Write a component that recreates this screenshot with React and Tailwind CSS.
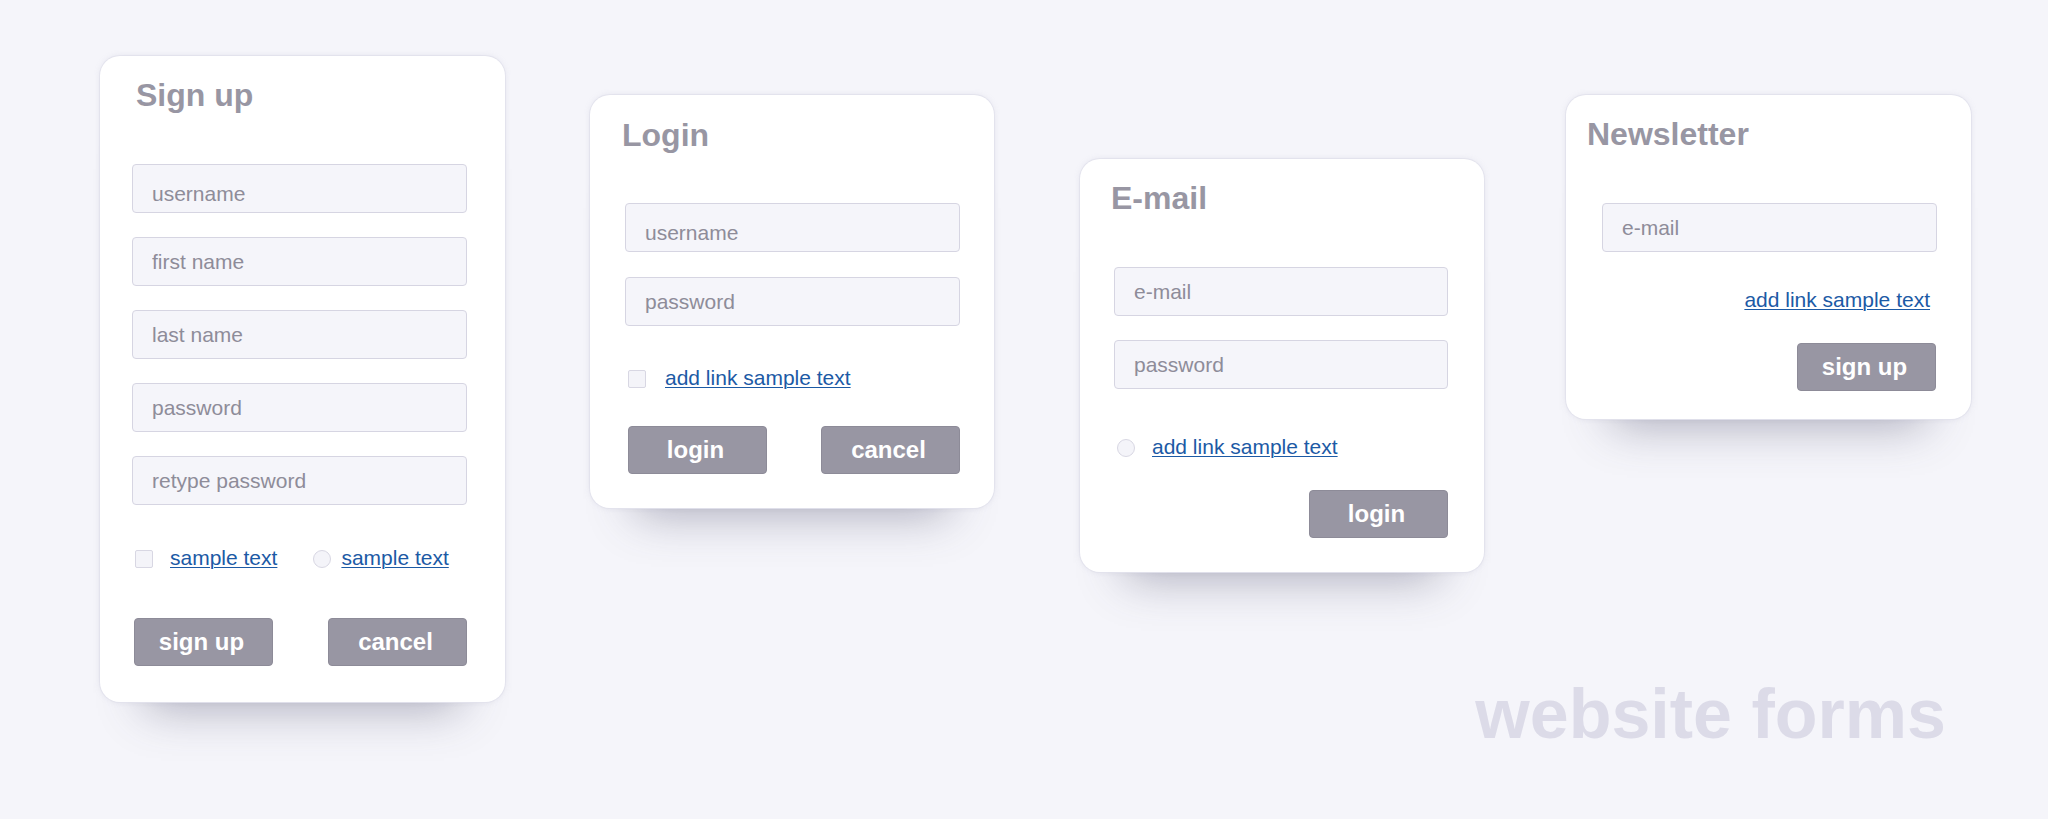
import React from 'react';

const cardCls =
  'bg-white rounded-[20px] shadow-[0_0_0_1px_rgba(226,226,236,0.9),0_0_6px_rgba(150,150,180,0.18),0_52px_44px_-46px_rgba(70,70,100,0.42)]';

function Field({ label, low }) {
  return (
    <input
      readOnly
      placeholder={label}
      className={`block w-full h-[49px] rounded-[4px] border border-[#d6d5e2] bg-[#f5f5fa] pl-[19px] text-[21px] text-[#8e8c99] placeholder:text-[#8e8c99] outline-none ${low ? 'pt-[11px]' : 'pt-0'}`}
    />
  );
}

function Title({ children }) {
  return <h2 className="text-[32px] leading-none font-bold text-[#9896a3]">{children}</h2>;
}

function Check({ round }) {
  return (
    <span
      className={`w-[18px] h-[18px] flex-shrink-0 border border-[#d8d7e3] bg-[#f4f4f9] ${round ? 'rounded-full' : 'rounded-[2px]'}`}
    />
  );
}

function LinkText({ children }) {
  return (
    <a href="#" className="text-[21px] leading-[24px] text-[#1c5aa5] underline decoration-1 underline-offset-2 whitespace-nowrap">
      {children}
    </a>
  );
}

function Btn({ children, className = '' }) {
  return (
    <button className={`w-[139px] h-[48px] rounded-[4px] border border-[#8d8b98] bg-[#9896a3] text-white text-[24px] font-bold leading-none pr-[4px] ${className}`}>
      {children}
    </button>
  );
}

export default function App() {
  return (
    <div className="min-h-[819px] w-full bg-[#f5f5fa] font-['Liberation_Sans',Arial,sans-serif] pl-[100px] flex items-start">
      {/* Sign up */}
      <div className={`${cardCls} mt-[56px] w-[405px] pt-[23px] pb-[36px] pl-[32px] pr-[38px]`}>
        <div className="pl-[4px]">
          <Title>Sign up</Title>
        </div>
        <div className="mt-[53px] flex flex-col gap-[24px]">
          <Field label="username" low />
          <Field label="first name" />
          <Field label="last name" />
          <Field label="password" />
          <Field label="retype password" />
        </div>
        <div className="mt-[42px] h-[24px] flex items-center">
          <span className="ml-[3px]" />
          <Check />
          <span className="ml-[17px]"><LinkText>sample text</LinkText></span>
          <span className="ml-[36px]" />
          <Check round />
          <span className="ml-[10px]"><LinkText>sample text</LinkText></span>
        </div>
        <div className="mt-[47px] flex justify-between">
          <Btn className="ml-[2px]">sign up</Btn>
          <Btn>cancel</Btn>
        </div>
      </div>

      <div className="ml-[85px] flex flex-col">
        <div className="flex items-start">
          {/* Login */}
          <div className={`${cardCls} mt-[95px] w-[404px] pt-[24px] pb-[34px] pl-[32px] pr-[34px]`}>
            <Title>Login</Title>
            <div className="mt-[52px] ml-[3px] flex flex-col gap-[25px]">
              <Field label="username" low />
              <Field label="password" />
            </div>
            <div className="mt-[41px] h-[24px] flex items-center pl-[6px]">
              <Check />
              <span className="ml-[19px]"><LinkText>add link sample text</LinkText></span>
            </div>
            <div className="mt-[35px] pl-[6px] flex justify-between">
              <Btn className="w-[138px]">login</Btn>
              <Btn>cancel</Btn>
            </div>
          </div>

          {/* E-mail */}
          <div className={`${cardCls} ml-[86px] mt-[159px] w-[404px] pt-[23px] pb-[34px] pl-[31px] pr-[36px]`}>
            <Title>E-mail</Title>
            <div className="mt-[53px] ml-[3px] flex flex-col gap-[24px]">
              <Field label="e-mail" />
              <Field label="password" />
            </div>
            <div className="mt-[47px] h-[24px] flex items-center pl-[6px]">
              <Check round />
              <span className="ml-[17px]"><LinkText>add link sample text</LinkText></span>
            </div>
            <div className="mt-[30px] flex justify-end">
              <Btn>login</Btn>
            </div>
          </div>

          {/* Newsletter */}
          <div className={`${cardCls} ml-[82px] mt-[95px] w-[405px] pt-[23px] pb-[28px] pl-[21px] pr-[34px]`}>
            <Title>Newsletter</Title>
            <div className="mt-[53px] ml-[15px]">
              <Field label="e-mail" />
            </div>
            <div className="mt-[36px] flex justify-end pr-[7px]">
              <LinkText>add link sample text</LinkText>
            </div>
            <div className="mt-[31px] flex justify-end pr-[1px]">
              <Btn>sign up</Btn>
            </div>
          </div>
        </div>

        <p className="self-end mr-[25px] mt-[107px] text-[70px] leading-none font-bold text-[#dcdbe8] whitespace-nowrap">
          website forms
        </p>
      </div>
    </div>
  );
}
